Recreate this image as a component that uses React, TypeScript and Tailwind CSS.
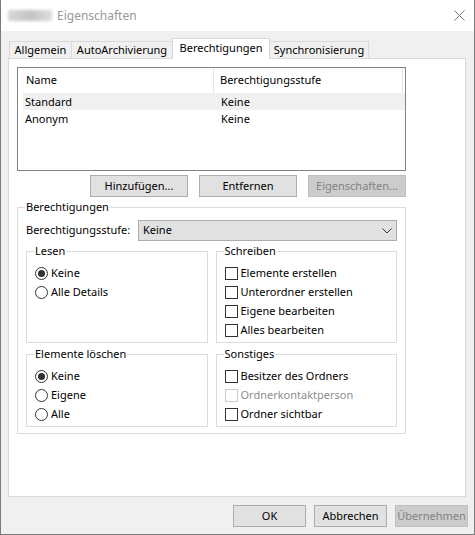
import type { ReactNode } from "react";

const font = "font-['Noto_Sans','Liberation_Sans',sans-serif]";

function Radio({ label, checked }: { label: string; checked?: boolean }) {
  return (
    <div className="flex h-[19px] items-center gap-[3px]">
      <span className="flex h-[13px] w-[13px] items-center justify-center rounded-full border border-[#333333] bg-white">
        {checked && <span className="h-[7px] w-[7px] rounded-full bg-[#333333]" />}
      </span>
      <span>{label}</span>
    </div>
  );
}

function Check({ label, disabled }: { label: string; disabled?: boolean }) {
  return (
    <div className="flex h-[19px] items-center gap-[3px]">
      <span
        className={`h-[13px] w-[13px] border bg-white ${
          disabled ? "border-[#cccccc]" : "border-[#333333]"
        }`}
      />
      <span className={disabled ? "text-[#8d8d8d]" : ""}>{label}</span>
    </div>
  );
}

// fieldsets all use 8px left padding, so the legend pulls back 1px to sit at x+8
function Group({ title, children, className = "" }: { title: string; children: ReactNode; className?: string }) {
  return (
    <fieldset className={`border border-[#dcdcdc] ${className}`}>
      <legend className="-ml-[1px] px-[1px] leading-[16px]">{title}</legend>
      {children}
    </fieldset>
  );
}

function Button({ label, disabled, width }: { label: string; disabled?: boolean; width: string }) {
  return (
    <div
      className={`flex h-[22px] items-center justify-center border ${width} ${
        disabled
          ? "border-[#bfbfbf] bg-[#cccccc] text-[#838383]"
          : "border-[#adadad] bg-[#e1e1e1]"
      }`}
    >
      {label}
    </div>
  );
}

const rows = [
  { name: "Standard", level: "Keine", selected: true },
  { name: "Anonym", level: "Keine", selected: false },
];

export default function App() {
  return (
    <div
      className={`flex h-[535px] w-[475px] flex-col border-x border-b border-[#7a7a7a] bg-[#f0f0f0] text-[11px] text-black ${font}`}
    >
      {/* title bar */}
      <div className="flex h-[31px] items-center bg-white pl-[7px] pr-[9px]">
        <span className="h-[11px] w-[44px] bg-gradient-to-r from-[#d8d8d8] via-[#c4c4c4] to-[#dddddd] blur-[1.5px]" />
        <span className="ml-[5px] text-[12px] text-[#999999]">Eigenschaften</span>
        <svg className="ml-auto" width="11" height="11" viewBox="0 0 11 11">
          <path d="M0.5 0.5 L10.5 10.5 M10.5 0.5 L0.5 10.5" stroke="#777777" strokeWidth="1" fill="none" />
        </svg>
      </div>

      <div className="flex flex-col pl-[7px] pr-[6px]">
        {/* tabs */}
        <div className="mt-[7px] flex h-[20px] items-end pl-[1px]">
          <div className="flex h-[17px] w-[63px] items-center justify-center border-x border-t border-[#d9d9d9]">Allgemein</div>
          <div className="-ml-px flex h-[17px] w-[102px] items-center justify-center border-x border-t border-[#d9d9d9]">AutoArchivierung</div>
          <div className="relative z-10 -mb-px -ml-px flex h-[21px] w-[98px] items-center justify-center border-x border-t border-[#d9d9d9] bg-white pb-[2px]">
            Berechtigungen
          </div>
          <div className="-ml-px flex h-[17px] w-[100px] items-center justify-center border-x border-t border-[#d9d9d9]">Synchronisierung</div>
        </div>

        {/* panel */}
        <div className="flex h-[439px] w-[458px] flex-col border border-[#d9d9d9] bg-white pl-[8px] pt-[8px]">
          <div className="flex h-[104px] w-[389px] flex-col border border-[#828282]">
            <div className="flex h-[25px] items-center">
              <div className="flex h-full w-[196px] items-center border-r border-[#e5e5e5] pl-[8px]">Name</div>
              <div className="flex h-full w-[189px] items-center border-r border-[#e5e5e5] pl-[6px]">Berechtigungsstufe</div>
            </div>
            {rows.map((row) => (
              <div
                key={row.name}
                className={`ml-[5px] flex h-[17px] items-center pt-[1px] ${row.selected ? "bg-[#f0f0f0]" : ""}`}
              >
                <span className="w-[198px] pl-[2px]">{row.name}</span>
                <span>{row.level}</span>
              </div>
            ))}
          </div>

          <div className="mt-[4px] flex w-[389px] justify-end gap-[11px]">
            <Button label="Hinzufügen..." width="w-[98px]" />
            <Button label="Entfernen" width="w-[98px]" />
            <Button label="Eigenschaften..." width="w-[98px]" disabled />
          </div>

          <Group title="Berechtigungen" className="mt-[2px] w-[389px] px-[8px] pb-[6px] pt-[5px]">
            <div className="flex h-[21px] items-center">
              <span className="w-[112px]">Berechtigungsstufe:</span>
              <div className="flex h-[21px] flex-1 items-center justify-between border border-[#adadad] bg-[#e1e1e1] pl-[4px] pr-[4px]">
                <span>Keine</span>
                <svg width="10" height="6" viewBox="0 0 10 6">
                  <path d="M0.5 0.5 L5 5 L9.5 0.5" stroke="#333333" strokeWidth="1" fill="none" />
                </svg>
              </div>
            </div>

            <div className="mt-[2px] grid grid-cols-2 gap-x-[8px] gap-y-[3px]">
              <Group title="Lesen" className="pl-[8px] pb-[2px] pt-[5px]">
                <Radio label="Keine" checked />
                <Radio label="Alle Details" />
              </Group>
              <Group title="Schreiben" className="pl-[8px] pb-[2px] pt-[5px]">
                <Check label="Elemente erstellen" />
                <Check label="Unterordner erstellen" />
                <Check label="Eigene bearbeiten" />
                <Check label="Alles bearbeiten" />
              </Group>
              <Group title="Elemente löschen" className="pl-[8px] pb-[2px] pt-[5px]">
                <Radio label="Keine" checked />
                <Radio label="Eigene" />
                <Radio label="Alle" />
              </Group>
              <Group title="Sonstiges" className="pl-[8px] pb-[2px] pt-[5px]">
                <Check label="Besitzer des Ordners" />
                <Check label="Ordnerkontaktperson" disabled />
                <Check label="Ordner sichtbar" />
              </Group>
            </div>
          </Group>
        </div>

        {/* dialog buttons */}
        <div className="mt-[8px] flex justify-end gap-[8px]">
          <Button label="OK" width="w-[73px]" />
          <Button label="Abbrechen" width="w-[73px]" />
          <Button label="Übernehmen" width="w-[73px]" disabled />
        </div>
      </div>
    </div>
  );
}
